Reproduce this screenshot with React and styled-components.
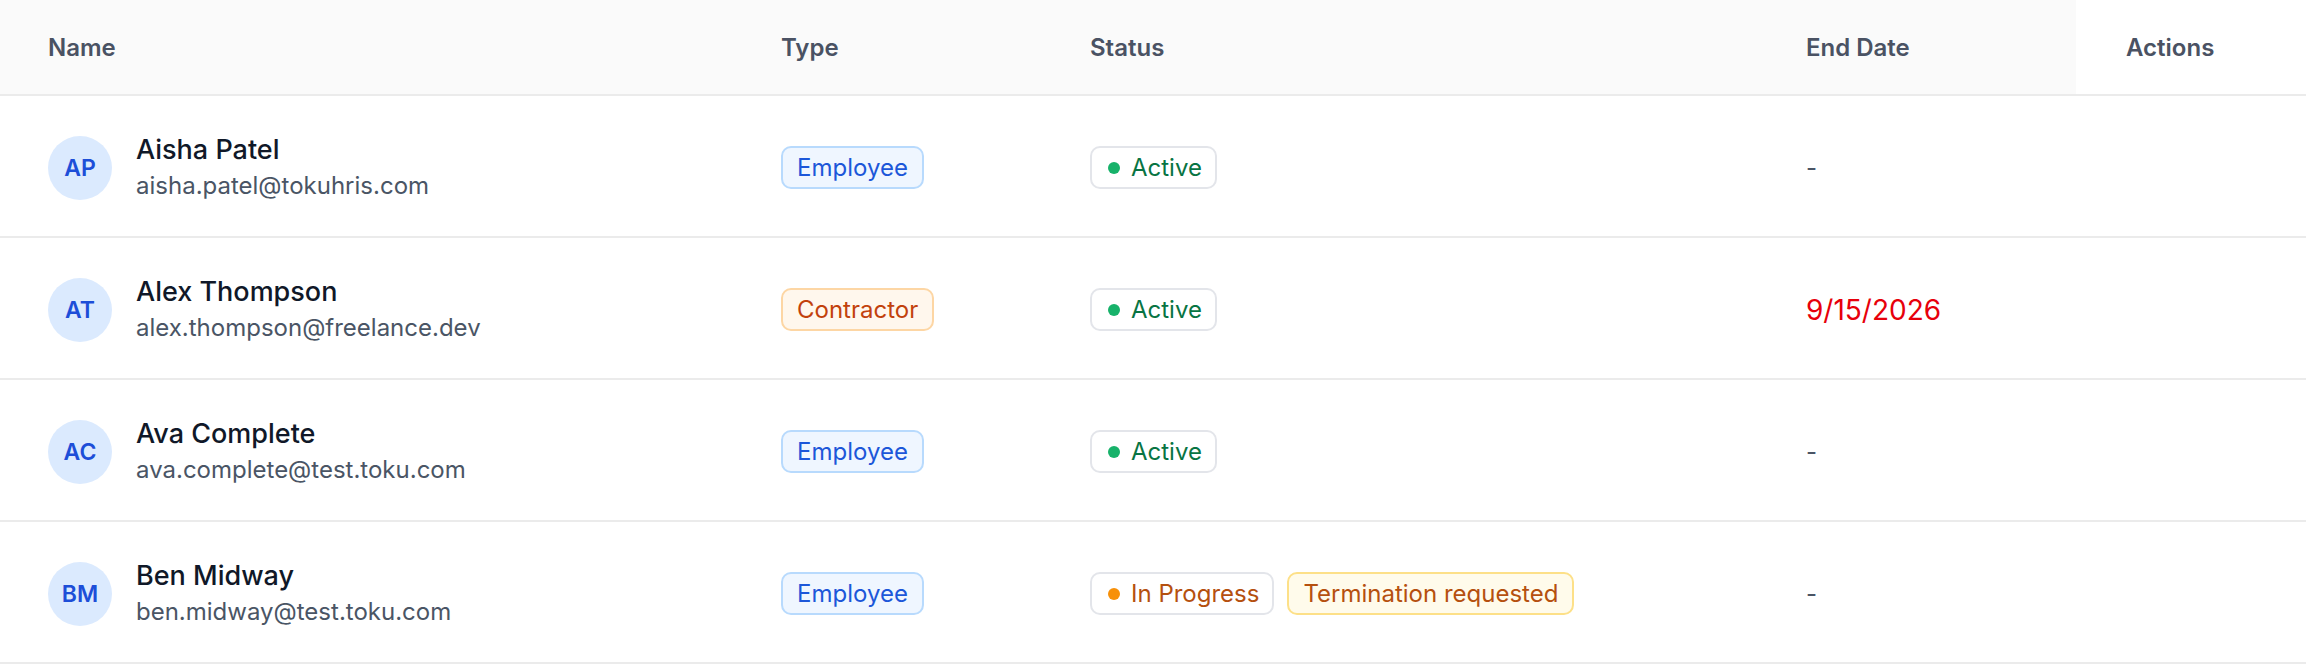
import React from "react";
import styled, { createGlobalStyle } from "styled-components";

const Global = createGlobalStyle`
  html, body { margin: 0; padding: 0; background: #ffffff; }
  body { font-family: Inter, "Noto Sans", "Liberation Sans", sans-serif; -webkit-font-smoothing: antialiased; }
`;

const COLS = "733px 309px 716px 318px 1fr";

const Table = styled.div`
  width: 2306px;
  display: flex;
  flex-direction: column;
  background: #ffffff;
`;

const HeaderRow = styled.div`
  display: grid;
  grid-template-columns: ${COLS};
  height: 94px;
  background: #fafafa;
  border-bottom: 2px solid #ebebeb;
`;

const HeaderCell = styled.div`
  display: flex;
  align-items: center;
  padding-left: ${(p) => (p.$sticky ? "50px" : "48px")};
  background: ${(p) => (p.$sticky ? "#ffffff" : "transparent")};
  font-size: 24px;
  font-weight: 600;
  color: #4a5263;
`;

const Row = styled.div`
  display: grid;
  grid-template-columns: ${COLS};
  height: 140px;
  box-sizing: content-box;
  border-bottom: 2px solid #ebebeb;
`;

const Cell = styled.div`
  display: flex;
  align-items: center;
  gap: ${(p) => p.$gap || 0}px;
  padding: 3px 0 0 ${(p) => (p.$sticky ? "50px" : "48px")};
  box-sizing: border-box;
`;

const Avatar = styled.div`
  width: 64px;
  height: 64px;
  flex: none;
  border-radius: 50%;
  background: #dbeafe;
  color: #1d4ed8;
  font-size: 23px;
  font-weight: 600;
  display: flex;
  align-items: center;
  justify-content: center;
`;

const Person = styled.div`
  display: flex;
  flex-direction: column;
`;

const PersonName = styled.div`
  font-size: 27px;
  line-height: 36px;
  font-weight: 500;
  color: #101828;
`;

const Email = styled.div`
  font-size: 24px;
  line-height: 36px;
  color: #4a5565;
`;

const tones = {
  blue: { bg: "#eff6ff", border: "#b8dafd", color: "#1c57d9" },
  orange: { bg: "#fff7ed", border: "#fdd6a4", color: "#c2410c" },
  amber: { bg: "#fffbeb", border: "#fde088", color: "#b5500f" },
  neutral: { bg: "#ffffff", border: "#e3e5ea", color: "#b5500f" },
};

const Badge = styled.span`
  display: inline-flex;
  align-items: center;
  gap: 11px;
  height: 43px;
  box-sizing: border-box;
  padding: 0 ${(p) => (p.$dot ? "13px 0 16px" : "14px")};
  border-radius: 10px;
  border: 2px solid ${(p) => tones[p.$tone].border};
  background: ${(p) => tones[p.$tone].bg};
  color: ${(p) => p.$color || tones[p.$tone].color};
  font-size: 24px;
  line-height: 31px;
  white-space: nowrap;
`;

const Dot = styled.span`
  width: 12px;
  height: 12px;
  border-radius: 50%;
  flex: none;
  background: ${(p) => p.$color};
`;

const DateText = styled.span`
  font-size: 28px;
  color: ${(p) => (p.$alert ? "#e7000b" : "#4a5565")};
`;

const Dash = styled.span`
  font-size: 24px;
  color: #4a5565;
`;

const people = [
  {
    initials: "AP",
    name: "Aisha Patel",
    email: "aisha.patel@tokuhris.com",
    type: "Employee",
    status: [{ label: "Active", dot: "#17b26a", color: "#087443" }],
    end: null,
  },
  {
    initials: "AT",
    name: "Alex Thompson",
    email: "alex.thompson@freelance.dev",
    type: "Contractor",
    status: [{ label: "Active", dot: "#17b26a", color: "#087443" }],
    end: "9/15/2026",
  },
  {
    initials: "AC",
    name: "Ava Complete",
    email: "ava.complete@test.toku.com",
    type: "Employee",
    status: [{ label: "Active", dot: "#17b26a", color: "#087443" }],
    end: null,
  },
  {
    initials: "BM",
    name: "Ben Midway",
    email: "ben.midway@test.toku.com",
    type: "Employee",
    status: [
      { label: "In Progress", dot: "#f79009", color: "#b5500f" },
      { label: "Termination requested", tone: "amber" },
    ],
    end: null,
  },
];

export default function App() {
  return (
    <>
      <Global />
      <Table>
        <HeaderRow>
          <HeaderCell>Name</HeaderCell>
          <HeaderCell>Type</HeaderCell>
          <HeaderCell>Status</HeaderCell>
          <HeaderCell>End Date</HeaderCell>
          <HeaderCell $sticky>Actions</HeaderCell>
        </HeaderRow>
        {people.map((p) => (
          <Row key={p.email}>
            <Cell $gap={24}>
              <Avatar>{p.initials}</Avatar>
              <Person>
                <PersonName>{p.name}</PersonName>
                <Email>{p.email}</Email>
              </Person>
            </Cell>
            <Cell>
              <Badge $tone={p.type === "Contractor" ? "orange" : "blue"}>{p.type}</Badge>
            </Cell>
            <Cell $gap={13}>
              {p.status.map((s) =>
                s.dot ? (
                  <Badge key={s.label} $tone="neutral" $dot $color={s.color}>
                    <Dot $color={s.dot} />
                    {s.label}
                  </Badge>
                ) : (
                  <Badge key={s.label} $tone={s.tone}>
                    {s.label}
                  </Badge>
                )
              )}
            </Cell>
            <Cell>{p.end ? <DateText $alert>{p.end}</DateText> : <Dash>-</Dash>}</Cell>
            <Cell $sticky />
          </Row>
        ))}
      </Table>
    </>
  );
}
